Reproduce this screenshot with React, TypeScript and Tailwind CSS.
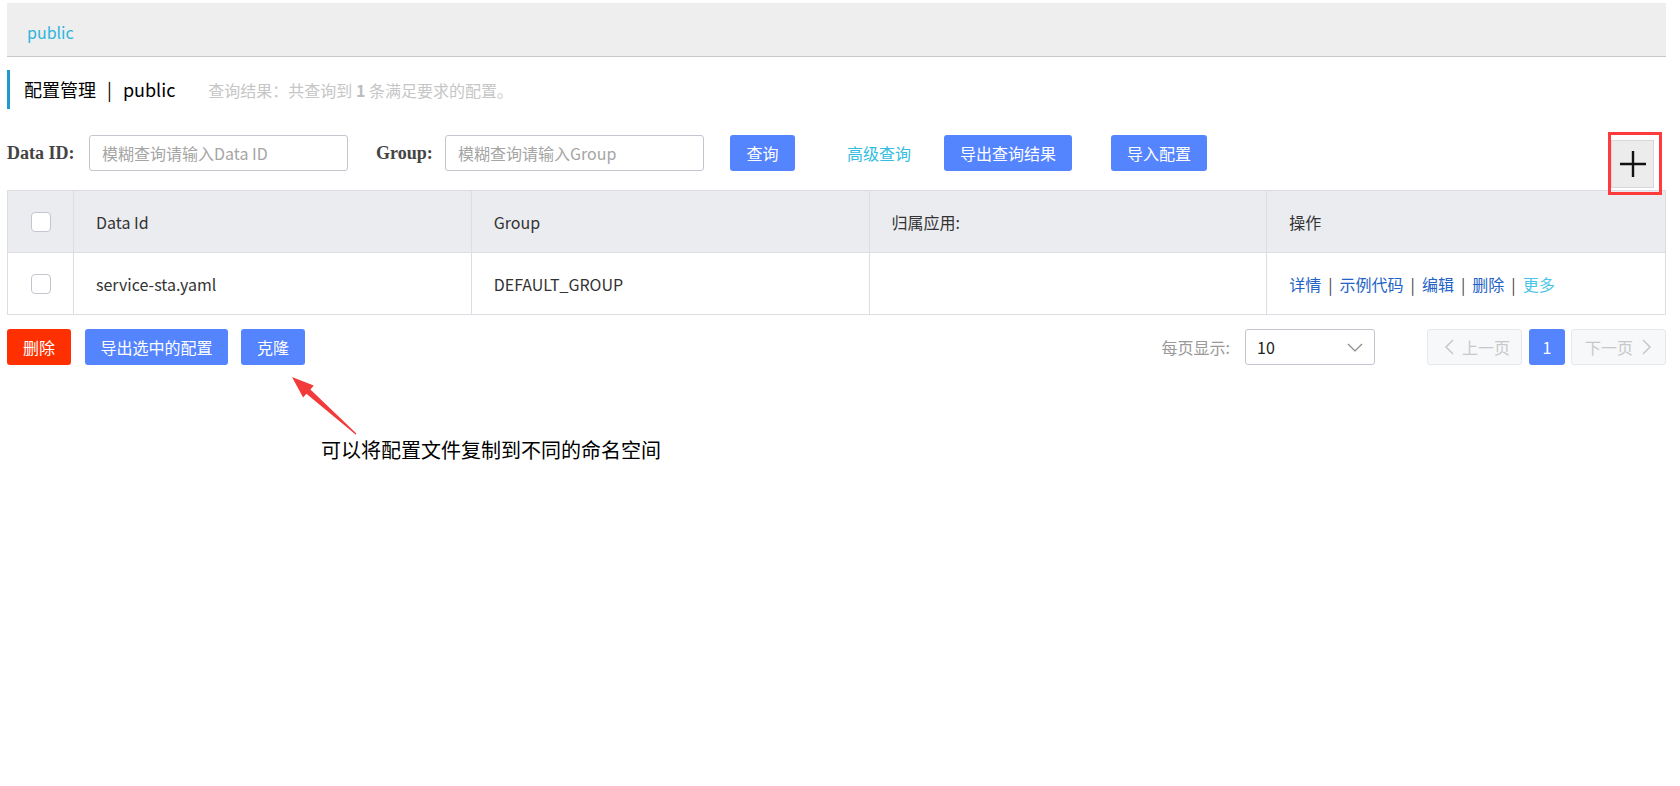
import React from 'react';

const PlusIcon = () => (
    <svg width="26" height="26" viewBox="0 0 26 26">
        <path d="M0 13 H26 M13 0 V26" stroke="#111" strokeWidth="2.4" />
    </svg>
);

const Chevron = ({ dir }: { dir: 'left' | 'right' | 'down' }) => {
    if (dir === 'down') {
        return (
            <svg width="16" height="9" viewBox="0 0 16 9">
                <path d="M1 1 L8 8 L15 1" fill="none" stroke="#888" strokeWidth="1.2" />
            </svg>
        );
    }
    return (
        <svg width="10" height="16" viewBox="0 0 10 16">
            <path
                d={dir === 'left' ? 'M9 1 L2 8 L9 15' : 'M1 1 L8 8 L1 15'}
                fill="none"
                stroke="#c8c8c8"
                strokeWidth="1.5"
            />
        </svg>
    );
};

const Checkbox = () => (
    <span className="block h-[20px] w-[20px] rounded-[4px] border border-[#c4c6cf] bg-white" />
);

const BlueButton = ({ label, width }: { label: string; width: string }) => (
    <button
        className={`flex h-[36px] items-center justify-center rounded-[3px] bg-[#5584ff] text-[16px] text-white ${width}`}
    >
        {label}
    </button>
);

export default function App() {
    const actions = ['详情', '示例代码', '编辑', '删除'];

    return (
        <div className="relative h-[786px] w-[1680px] bg-white pl-[7px] pr-[14px] pt-[3px] font-['Noto_Sans_CJK_SC',sans-serif] text-[#333]">
            {/* namespace tab bar */}
            <div className="flex h-[54px] items-center border-b border-[#c9c9c9] bg-[#eeeeee] pl-[20px] pt-[4px] text-[16px] text-[#2cb6dc]">
                public
            </div>

            {/* title */}
            <div className="mt-[13px] flex h-[39px] items-center border-l-[3px] border-[#1d9bd1] pl-[14px]">
                <span className="text-[18px] text-black">
                    配置管理<span className="mx-[11px]">|</span>public
                </span>
                <span className="ml-[33px] text-[16px] text-[#c6c6c6]">
                    查询结果：共查询到 <b className="text-[#bdbdbd]">1</b> 条满足要求的配置。
                </span>
            </div>

            {/* search row */}
            <div className="mt-[26px] flex items-start">
                <div className="flex h-[36px] items-center">
                    <span className="w-[66px] whitespace-nowrap font-['Liberation_Serif',serif] text-[18px] font-bold text-[#444]">
                        Data ID:
                    </span>
                    <input
                        className="ml-[16px] h-[36px] w-[259px] rounded-[3px] border border-[#c4c6cf] px-[12px] text-[16px] outline-none placeholder:text-[#a5a5a5]"
                        placeholder="模糊查询请输入Data ID"
                    />
                    <span className="ml-[28px] w-[52px] whitespace-nowrap font-['Liberation_Serif',serif] text-[18px] font-bold text-[#444]">
                        Group:
                    </span>
                    <input
                        className="ml-[17px] h-[36px] w-[259px] rounded-[3px] border border-[#c4c6cf] px-[12px] text-[16px] outline-none placeholder:text-[#a5a5a5]"
                        placeholder="模糊查询请输入Group"
                    />
                    <div className="ml-[26px]">
                        <BlueButton label="查询" width="w-[65px]" />
                    </div>
                    <span className="ml-[52px] text-[16px] text-[#33bde0]">高级查询</span>
                    <div className="ml-[33px]">
                        <BlueButton label="导出查询结果" width="w-[128px]" />
                    </div>
                    <div className="ml-[39px]">
                        <BlueButton label="导入配置" width="w-[96px]" />
                    </div>
                </div>

                <div className="relative ml-auto mr-[12px] mt-[5px] flex h-[48px] w-[43px] items-center justify-center border border-[#d8d8d8] bg-[#ececec]">
                    <PlusIcon />
                    <div className="absolute -bottom-[8px] -left-[4px] -right-[9px] -top-[9px] z-10 border-[3px] border-[#ff3b3b]" />
                </div>
            </div>

            {/* table */}
            <div className="mt-[2px] border border-[#dcdee3] text-[16px] text-[#333]">
                <div className="grid h-[62px] grid-cols-[66px_1fr_1fr_1fr_1fr] border-b border-[#dcdee3] bg-[#ebecf0]">
                    <div className="flex items-center justify-center border-r border-[#dcdee3]">
                        <Checkbox />
                    </div>
                    <div className="flex items-center border-r border-[#dcdee3] pl-[22px]">Data Id</div>
                    <div className="flex items-center border-r border-[#dcdee3] pl-[22px]">Group</div>
                    <div className="flex items-center border-r border-[#dcdee3] pl-[22px]">归属应用:</div>
                    <div className="flex items-center pl-[22px]">操作</div>
                </div>
                <div className="grid h-[61px] grid-cols-[66px_1fr_1fr_1fr_1fr]">
                    <div className="flex items-center justify-center border-r border-[#dcdee3]">
                        <Checkbox />
                    </div>
                    <div className="flex items-center border-r border-[#dcdee3] pl-[22px]">service-sta.yaml</div>
                    <div className="flex items-center border-r border-[#dcdee3] pl-[22px]">DEFAULT_GROUP</div>
                    <div className="border-r border-[#dcdee3]" />
                    <div className="flex items-center pl-[22px]">
                        {actions.map((a) => (
                            <React.Fragment key={a}>
                                <span className="text-[#2362c6]">{a}</span>
                                <span className="mx-[7px] text-[#444]">|</span>
                            </React.Fragment>
                        ))}
                        <span className="text-[#48c5e8]">更多</span>
                    </div>
                </div>
            </div>

            {/* bottom bar */}
            <div className="mt-[14px] flex h-[36px] items-center justify-between text-[16px]">
                <div className="flex items-center">
                    <button className="flex h-[36px] w-[64px] items-center justify-center rounded-[3px] bg-[#ff3000] text-white">
                        删除
                    </button>
                    <div className="ml-[14px]">
                        <BlueButton label="导出选中的配置" width="w-[143px]" />
                    </div>
                    <div className="ml-[13px]">
                        <BlueButton label="克隆" width="w-[64px]" />
                    </div>
                </div>

                <div className="flex items-center">
                    <span className="text-[#999]">每页显示:</span>
                    <div className="ml-[15px] flex h-[36px] w-[130px] items-center justify-between rounded-[3px] border border-[#c4c6cf] pl-[11px] pr-[11px] text-[#222]">
                        <span>10</span>
                        <Chevron dir="down" />
                    </div>
                    <div className="ml-[52px] flex h-[36px] w-[95px] items-center rounded-[3px] border border-[#e6e7eb] bg-[#f7f8fa] pl-[16px] text-[#c8c8c8]">
                        <Chevron dir="left" />
                        <span className="ml-[8px]">上一页</span>
                    </div>
                    <div className="ml-[7px] flex h-[36px] w-[36px] items-center justify-center rounded-[3px] bg-[#5584ff] text-white">
                        1
                    </div>
                    <div className="ml-[6px] flex h-[36px] w-[95px] items-center rounded-[3px] border border-[#e6e7eb] bg-[#f7f8fa] pl-[13px] text-[#c8c8c8]">
                        <span>下一页</span>
                        <span className="ml-[9px]">
                            <Chevron dir="right" />
                        </span>
                    </div>
                </div>
            </div>

            {/* annotation */}
            <div className="mt-[71px] pl-[314px] text-[20px] leading-[28px] text-black">
                可以将配置文件复制到不同的命名空间
            </div>
            <svg
                className="pointer-events-none absolute left-[285px] top-[370px]"
                width="80"
                height="70"
                viewBox="0 0 80 70"
            >
                <polygon
                    points="7,7 28.7,15.6 25.4,19.4 71.4,63.6 70.6,64.4 21.4,23.8 18.1,27.6"
                    fill="#f23a3a"
                />
            </svg>
        </div>
    );
}
